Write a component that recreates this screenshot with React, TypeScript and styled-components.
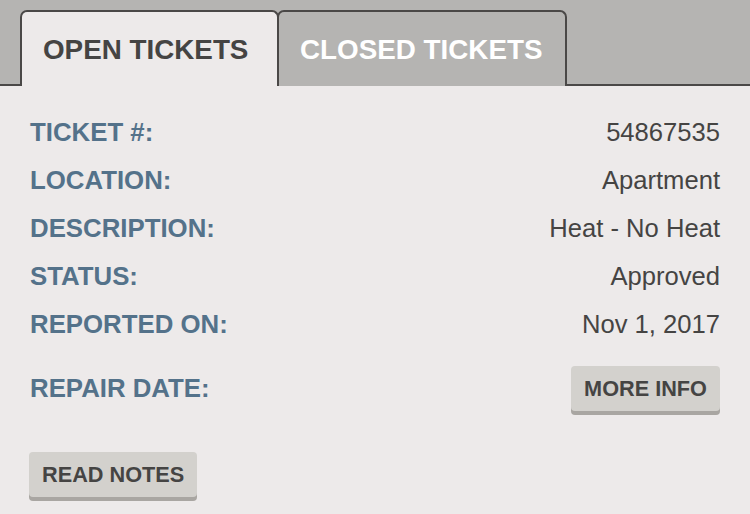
import React from "react";
import styled, { createGlobalStyle } from "styled-components";

const Global = createGlobalStyle`
  html, body { margin: 0; padding: 0; background: #edeaea; }
  body { font-family: "Liberation Sans", Arial, sans-serif; }
  * { box-sizing: border-box; }
`;

const Page = styled.div`
  width: 750px;
  height: 514px;
  background: #edeaea;
  overflow: hidden;
`;

const TabBar = styled.div`
  display: flex;
  align-items: flex-end;
  height: 86px;
  padding: 10px 0 0 20px;
  background: #b5b4b2;
  border-bottom: 2px solid #4a4847;
`;

const Tab = styled.div<{ $active?: boolean; $width: number }>`
  width: ${(p) => p.$width}px;
  height: 76px;
  margin-bottom: -2px;
  padding: 22px 0 0 21px;
  border: 2px solid #4a4847;
  border-bottom: none;
  border-radius: 7px 7px 0 0;
  background: ${(p) => (p.$active ? "#edeaea" : "#b5b4b2")};
  color: ${(p) => (p.$active ? "#454443" : "#ffffff")};
  font-weight: 700;
  font-size: 27.8px;
  line-height: 32px;
  white-space: nowrap;
  & + & { margin-left: -2px; }
`;

const Body = styled.div`
  padding: 22px 30px 0 30px;
`;

const Row = styled.div`
  display: flex;
  justify-content: space-between;
  align-items: flex-start;
  height: 48px;
`;

const ActionRow = styled(Row)`
  height: 49px;
  margin-top: 18px;
`;

const Label = styled.div<{ $lh?: number }>`
  color: #54728a;
  font-weight: 700;
  font-size: 25.8px;
  line-height: ${(p) => p.$lh ?? 48}px;
  white-space: nowrap;
`;

const Value = styled.div`
  color: #454443;
  font-size: 25.6px;
  line-height: 48px;
  white-space: nowrap;
`;

const Button = styled.button`
  height: 45px;
  padding: 0 13px;
  margin: 0;
  border: none;
  border-radius: 4px;
  background: #d3d1cd;
  box-shadow: 0 4px 0 #a9a6a2;
  color: #454443;
  font-family: "Liberation Sans", Arial, sans-serif;
  font-weight: 700;
  font-size: 21.7px;
  line-height: 45px;
  white-space: nowrap;
  cursor: pointer;
`;

const NotesWrap = styled.div`
  margin-top: 37px;
  margin-left: -1px;
`;

const rows: [string, string][] = [
  ["TICKET #:", "54867535"],
  ["LOCATION:", "Apartment"],
  ["DESCRIPTION:", "Heat - No Heat"],
  ["STATUS:", "Approved"],
  ["REPORTED ON:", "Nov 1, 2017"],
];

export default function App() {
  return (
    <Page>
      <Global />
      <TabBar>
        <Tab $active $width={259}>OPEN TICKETS</Tab>
        <Tab $width={290}>CLOSED TICKETS</Tab>
      </TabBar>
      <Body>
        {rows.map(([l, v]) => (
          <Row key={l}>
            <Label>{l}</Label>
            <Value>{v}</Value>
          </Row>
        ))}
        <ActionRow>
          <Label $lh={45}>REPAIR DATE:</Label>
          <Button>MORE INFO</Button>
        </ActionRow>
        <NotesWrap>
          <Button>READ NOTES</Button>
        </NotesWrap>
      </Body>
    </Page>
  );
}
